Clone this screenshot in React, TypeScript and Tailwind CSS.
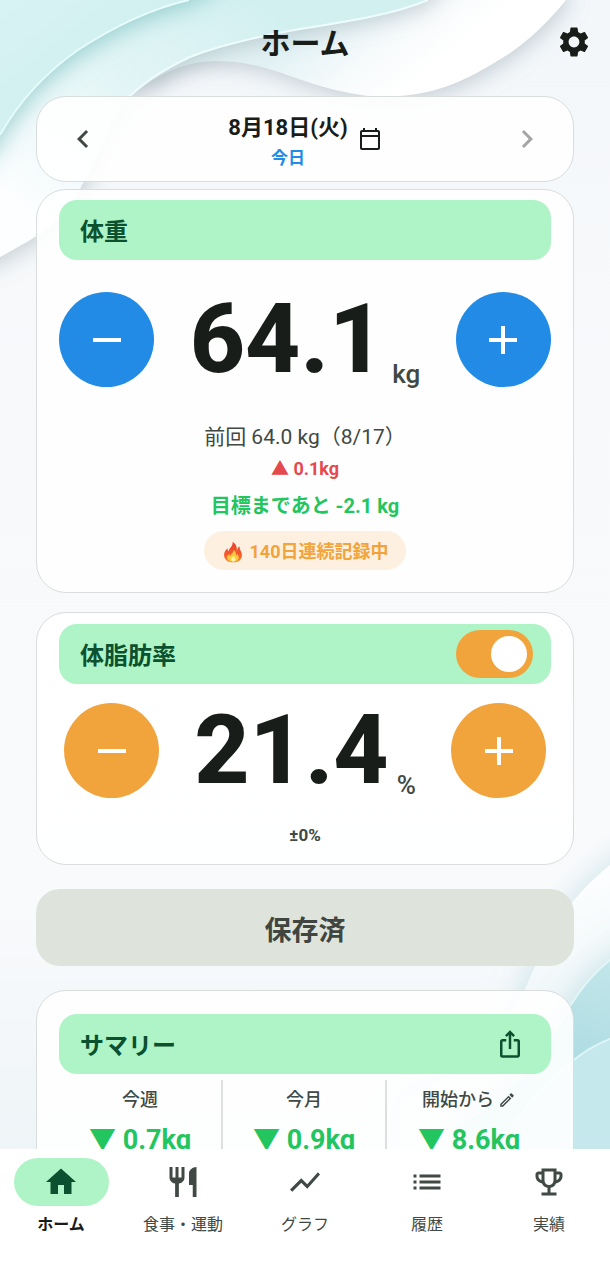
import { useState } from "react";
import type { ReactNode } from "react";
import type { IconType } from "react-icons";
import {
  MdAdd,
  MdChevronLeft,
  MdChevronRight,
  MdHome,
  MdIosShare,
  MdList,
  MdOutlineCalendarToday,
  MdOutlineEdit,
  MdOutlineEmojiEvents,
  MdRemove,
  MdRestaurant,
  MdSettings,
  MdShowChart,
} from "react-icons/md";

const TABS: { label: string; href: string; icon: IconType }[] = [
  { label: "ホーム", href: "#home", icon: MdHome },
  { label: "食事・運動", href: "#meals", icon: MdRestaurant },
  { label: "グラフ", href: "#graph", icon: MdShowChart },
  { label: "履歴", href: "#history", icon: MdList },
  { label: "実績", href: "#awards", icon: MdOutlineEmojiEvents },
];

const SUMMARY = [
  { label: "今週", value: "0.7kg", editable: false },
  { label: "今月", value: "0.9kg", editable: false },
  { label: "開始から", value: "8.6kg", editable: true },
];

export default function App() {
  const [weight, setWeight] = useState(64.1);
  const [fat, setFat] = useState(21.4);
  const [fatEnabled, setFatEnabled] = useState(true);

  return (
    <div className="relative flex h-screen flex-col overflow-hidden bg-[#f8fafc] font-['Roboto','Noto_Sans_CJK_JP',sans-serif] text-[#191d1a]">
      <Backdrop />

      <header className="relative grid h-24 shrink-0 grid-cols-[1fr_auto_1fr] items-start px-[18px] pt-6">
        <h1 className="col-start-2 text-[30px] font-bold leading-10">ホーム</h1>
        <button type="button" aria-label="設定" className="justify-self-end">
          <MdSettings className="size-9" />
        </button>
      </header>

      <main className="relative min-h-0 flex-1 overflow-y-auto px-9 [scrollbar-width:none]">
        <section className="flex h-[86px] items-center justify-between rounded-[30px] border border-[#d9dddb] bg-white/90 px-7">
          <button type="button" aria-label="前の日" className="text-[#404943]">
            <MdChevronLeft className="size-9" />
          </button>
          <button type="button" className="flex items-center gap-[10px]">
            <span className="flex flex-col items-center pt-[6px]">
              <span className="text-[22px] font-bold leading-8">
                8月18日(火)
              </span>
              <span className="text-[17px] font-bold leading-7 text-[#228be6]">
                今日
              </span>
            </span>
            <MdOutlineCalendarToday className="size-6" />
          </button>
          <button
            type="button"
            aria-label="次の日"
            disabled
            className="text-[#a3a6a4]"
          >
            <MdChevronRight className="size-9" />
          </button>
        </section>

        <Card className="mt-[7px] pb-[22px] pt-[10px]">
          <CardHeader title="体重" />
          <Stepper
            value={weight}
            unit="kg"
            label="体重"
            onChange={setWeight}
            className="mt-8"
            buttonClassName="bg-[#228be6]"
          />
          <div className="mt-8 flex flex-col items-center">
            <p className="text-[21px] leading-9 text-[#404943]">
              前回 64.0 kg（8/17）
            </p>
            <p className="text-[18px] font-bold leading-7 text-[#e5484d]">
              ▲ 0.1kg
            </p>
            <p className="mt-2 text-[20px] font-bold leading-[30px] text-[#22c55e]">
              目標まであと -2.1 kg
            </p>
            <p className="mt-[10px] flex h-[39px] items-center gap-[6px] rounded-full bg-[#fdf0e0] px-[18px] pt-[2px] text-[18px] font-bold text-[#f1a33c]">
              <Flame />
              140日連続記録中
            </p>
          </div>
        </Card>

        <Card className="mt-[19px] pb-[17px] pt-[11px]">
          <CardHeader title="体脂肪率">
            <label className="relative block h-12 w-[77px] cursor-pointer">
              <input
                type="checkbox"
                checked={fatEnabled}
                onChange={(e) => setFatEnabled(e.target.checked)}
                aria-label="体脂肪率を記録"
                className="peer sr-only"
              />
              <span className="flex h-full items-center rounded-full bg-[#c3c8c4] px-[6px] peer-checked:justify-end peer-checked:bg-[#f1a33c]">
                <span className="size-9 rounded-full bg-white" />
              </span>
            </label>
          </CardHeader>
          <Stepper
            value={fat}
            unit="%"
            label="体脂肪率"
            onChange={setFat}
            className="mt-[19px] px-[5px]"
            buttonClassName="bg-[#f1a33c]"
          />
          <p className="mt-[25px] text-center text-[17px] font-bold leading-6 text-[#404943]">
            ±0%
          </p>
        </Card>

        <button
          type="button"
          disabled
          className="mt-6 block h-[77px] w-full rounded-3xl bg-[#dee4dc] pt-2 text-[27px] font-bold text-[#404540]"
        >
          保存済
        </button>

        <Card className="mt-6 pb-6 pt-[23px]">
          <CardHeader title="サマリー">
            <button type="button" aria-label="共有" className="mr-2">
              <MdIosShare className="size-[30px]" />
            </button>
          </CardHeader>
          <dl className="mt-[6px] grid grid-cols-3 divide-x-2 divide-[#dcdfde]">
            {SUMMARY.map((item) => (
              <div
                key={item.label}
                className="flex flex-col items-center pb-6 pt-1"
              >
                <dt className="flex items-center gap-1 text-[18px] font-medium leading-8 text-[#404943]">
                  {item.label}
                  {item.editable ? (
                    <button type="button" aria-label="開始日を編集">
                      <MdOutlineEdit className="size-[18px]" />
                    </button>
                  ) : null}
                </dt>
                <dd className="mt-[6px] text-[27px] font-bold leading-9 text-[#22c55e]">
                  ▼ {item.value}
                </dd>
              </div>
            ))}
          </dl>
        </Card>
      </main>

      <nav className="relative grid h-[131px] shrink-0 grid-cols-5 items-start bg-white pt-[9px]">
        {TABS.map((tab, i) => (
          <Tab key={tab.href} {...tab} active={i === 0} />
        ))}
      </nav>
    </div>
  );
}

function Card(props: { className: string; children: ReactNode }) {
  return (
    <section
      className={`rounded-[30px] border border-[#d9dddb] bg-white/90 px-[22px] ${props.className}`}
    >
      {props.children}
    </section>
  );
}

function CardHeader(props: { title: string; children?: ReactNode }) {
  return (
    <div className="flex h-[60px] items-center justify-between rounded-[18px] bg-[#aff4c6] pl-[21px] pr-[18px] text-[#0b5130]">
      <h2 className="pt-1 text-[24px] font-bold leading-8">{props.title}</h2>
      {props.children}
    </div>
  );
}

function Stepper(props: {
  value: number;
  unit: string;
  label: string;
  onChange: (value: number) => void;
  className: string;
  buttonClassName: string;
}) {
  const step = (delta: number) =>
    props.onChange(Math.round((props.value + delta) * 10) / 10);

  return (
    <div className={`flex items-center justify-between ${props.className}`}>
      <button
        type="button"
        aria-label={`${props.label}を減らす`}
        onClick={() => step(-0.1)}
        className={`flex size-[95px] items-center justify-center rounded-full text-white ${props.buttonClassName}`}
      >
        <MdRemove className="size-12" />
      </button>
      <p className="flex items-end gap-2">
        <span className="text-[96px] font-extrabold leading-[95px]">
          {props.value.toFixed(1)}
        </span>
        <span className="text-[26px] font-medium leading-[26px] text-[#404943]">
          {props.unit}
        </span>
      </p>
      <button
        type="button"
        aria-label={`${props.label}を増やす`}
        onClick={() => step(0.1)}
        className={`flex size-[95px] items-center justify-center rounded-full text-white ${props.buttonClassName}`}
      >
        <MdAdd className="size-12" />
      </button>
    </div>
  );
}

function Tab(props: {
  label: string;
  href: string;
  icon: IconType;
  active: boolean;
}) {
  const Icon = props.icon;
  return (
    <a
      href={props.href}
      aria-current={props.active ? "page" : undefined}
      className={`flex flex-col items-center gap-[5px] ${
        props.active ? "font-bold text-[#191d1a]" : "font-normal text-[#404943]"
      }`}
    >
      <span
        className={`flex h-12 w-[95px] items-center justify-center rounded-full ${
          props.active ? "bg-[#aff4c6] text-[#0b5130]" : ""
        }`}
      >
        <Icon className="size-9" />
      </span>
      <span className="text-[16px] leading-7">{props.label}</span>
    </a>
  );
}

function Flame() {
  return (
    <svg viewBox="0 0 24 24" className="size-[22px]" aria-hidden="true">
      <defs>
        <linearGradient id="flame" x1="0" y1="0" x2="0" y2="1">
          <stop offset="0" stopColor="#e8402a" />
          <stop offset="0.6" stopColor="#f4592b" />
          <stop offset="1" stopColor="#f98a2c" />
        </linearGradient>
      </defs>
      <path
        d="M11.500 1c.6 3.200-1.200 4.700-2.900 6.900C7.800 9 7.300 10.200 7.300 11.300 6.400 10.500 6 9.400 6.100 8 3.400 10.300 1.800 13.300 2.300 16.700 3 20.800 6.700 23.300 12 23.300s9.200-2.600 9.700-7c.3-3.300-1.200-5.200-2.200-7.300-.4-.9-.4-1.900-.1-3-1.700.6-2.700 2-2.800 3.700-.1.700 0 1.300-.4 1.900C16.500 7 15.700 3 11.500 1z"
        fill="url(#flame)"
      />
      <path
        d="M12.600 9.500c.3 2.400-1.300 3.500-2.600 5-.5.600-.8 1.200-.8 1.900-.8-.5-1.200-1.200-1.300-2.200-1.600 1.300-2.500 2.900-2.200 4.700.5 2.400 3 3.700 6.200 3.700 3.500 0 6.100-1.500 6.300-4.300.1-1.800-.7-2.900-1.200-4.200-.9.300-1.300 1-1.500 1.900-.2-2.700-.6-5-2.900-6.500z"
        fill="#ffc93c"
      />
      <path
        d="M12.200 16c.1 1.500-2.500 2.300-2.400 4.300.1 1.300 1.100 2 2.400 2s2.500-.8 2.500-2.200c0-1.600-1-3-2.500-4.100z"
        fill="#fff3a6"
      />
    </svg>
  );
}

// Layered paper waves behind the whole screen.
function Backdrop() {
  return (
    <svg
      viewBox="0 0 610 1280"
      preserveAspectRatio="none"
      className="absolute inset-0 h-full w-full"
      aria-hidden="true"
    >
      <defs>
        <linearGradient id="base" x1="0" y1="0" x2="0" y2="1">
          <stop offset="0" stopColor="#f3f7fa" />
          <stop offset="0.3" stopColor="#f8f9fb" />
          <stop offset="0.7" stopColor="#f9fafc" />
          <stop offset="1" stopColor="#e9f2f5" />
        </linearGradient>
        <linearGradient id="wave1" x1="0" y1="0" x2="1" y2="1">
          <stop offset="0" stopColor="#dbf4f4" />
          <stop offset="1" stopColor="#c8eced" />
        </linearGradient>
        <linearGradient
          id="wave2"
          gradientUnits="userSpaceOnUse"
          x1="260"
          y1="0"
          x2="40"
          y2="230"
        >
          <stop offset="0" stopColor="#d3f0f1" />
          <stop offset="0.5" stopColor="#e3f5f6" />
          <stop offset="1" stopColor="#fdfeff" />
        </linearGradient>
        <linearGradient
          id="wave3"
          gradientUnits="userSpaceOnUse"
          x1="330"
          y1="10"
          x2="400"
          y2="95"
        >
          <stop offset="0" stopColor="#e2f2f4" />
          <stop offset="0.6" stopColor="#f8fbfc" />
          <stop offset="1" stopColor="#ffffff" />
        </linearGradient>
        <linearGradient
          id="corner1"
          gradientUnits="userSpaceOnUse"
          x1="560"
          y1="900"
          x2="600"
          y2="1000"
        >
          <stop offset="0" stopColor="#fbfdfe" />
          <stop offset="1" stopColor="#eef6f8" />
        </linearGradient>
        <linearGradient
          id="corner2"
          gradientUnits="userSpaceOnUse"
          x1="600"
          y1="960"
          x2="570"
          y2="1060"
        >
          <stop offset="0" stopColor="#c2e6ea" />
          <stop offset="1" stopColor="#aedce2" />
        </linearGradient>
        <filter id="shade" x="-20%" y="-20%" width="150%" height="150%">
          <feDropShadow
            dx="2"
            dy="5"
            stdDeviation="11"
            floodColor="#7d929c"
            floodOpacity="0.4"
          />
        </filter>
        <filter id="tealShade" x="-20%" y="-20%" width="150%" height="150%">
          <feDropShadow
            dx="2"
            dy="4"
            stdDeviation="12"
            floodColor="#5fb0b2"
            floodOpacity="0.6"
          />
        </filter>
        <filter id="cornerShade" x="-50%" y="-50%" width="200%" height="200%">
          <feDropShadow
            dx="-3"
            dy="-3"
            stdDeviation="14"
            floodColor="#8cc3cc"
            floodOpacity="0.35"
          />
        </filter>
      </defs>
      <rect width="610" height="1280" fill="url(#base)" />

      <path
        d="M566 -20V0C541 30 520 48 494 63C460 83 435 95 384 97C345 95 320 86 290 76C265 67 245 61 215 61C185 62 165 72 145 85L60 -20Z"
        fill="url(#wave3)"
        filter="url(#shade)"
      />
      <path
        d="M-40 -40H460L428 0C395 14 350 21 300 29C255 37 220 45 190 57C160 71 140 85 124 102C100 140 98 160 82 185C65 222 40 235 0 257L-40 275Z"
        fill="url(#wave2)"
        filter="url(#shade)"
      />
      <path
        d="M428 0C395 14 350 21 300 29C255 37 220 45 190 57C160 71 140 85 124 102"
        fill="none"
        stroke="#effcfd"
        strokeWidth="2"
      />
      <path
        d="M-40 -40H250L189 0C150 9 110 29 78 50C45 73 20 100 0 135L-40 190Z"
        fill="url(#wave1)"
        filter="url(#tealShade)"
      />
      <path
        d="M189 0C150 9 110 29 78 50C45 73 20 100 0 135"
        fill="none"
        stroke="#e6fbfb"
        strokeWidth="2"
      />

      <path
        d="M650 840L610 865C575 893 553 925 537 962C520 1000 500 1060 400 1100L400 1300H650Z"
        fill="url(#corner1)"
        filter="url(#cornerShade)"
      />
      <path
        d="M650 940L610 960C592 974 580 990 570 1006C545 1050 520 1090 450 1130L450 1300H650Z"
        fill="url(#corner2)"
        stroke="#e2f6f8"
        strokeWidth="2"
        filter="url(#cornerShade)"
      />
      <path
        d="M650 1025L610 1039C594 1045 582 1053 570 1063C540 1090 520 1110 480 1170L480 1300H650Z"
        fill="#c5e8ec"
        stroke="#dcf5f7"
        strokeWidth="2"
      />
    </svg>
  );
}
